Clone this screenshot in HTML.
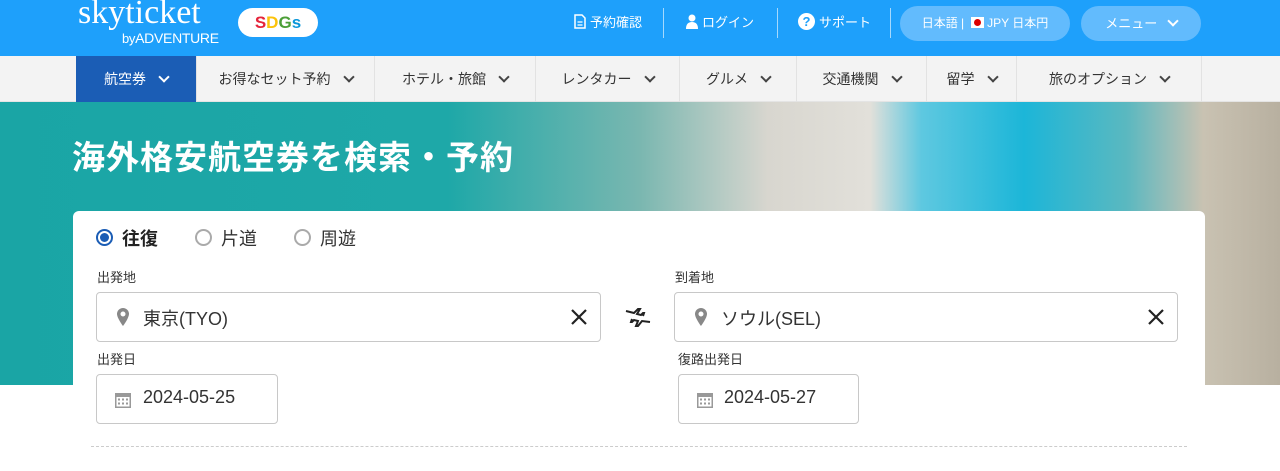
<!DOCTYPE html>
<html><head><meta charset="utf-8">
<style>
*{box-sizing:border-box;margin:0;padding:0}
body{width:1280px;height:454px;overflow:hidden;background:#fff;font-family:"Liberation Sans","Noto Sans CJK JP",sans-serif;position:relative}
.hdr{position:absolute;left:0;top:0;width:1280px;height:56px;background:#1ea0fb}
.logo{position:absolute;left:78px;top:-6px;color:#fff;font-family:"Liberation Serif",serif;font-size:34px}
.by{position:absolute;left:122px;top:30px;color:#fff;font-size:13px;letter-spacing:-0.3px}
.sdg{position:absolute;left:238px;top:8px;width:80px;height:29px;background:#fff;border-radius:15px;font-weight:bold;font-size:17px;text-align:center;line-height:29px}
.hl{position:absolute;top:12px;color:#fff;font-size:13px;display:flex;align-items:center;gap:4px}
.sep{position:absolute;top:8px;width:1px;height:30px;background:rgba(255,255,255,.6)}
.pill{position:absolute;top:6px;height:35px;background:#62bbfd;border-radius:18px;color:#fff;font-size:12px;line-height:35px;text-align:center}
.nav{position:absolute;left:0;top:56px;width:1280px;height:46px;background:#f3f3f3;border-bottom:1px solid #e4e4e4}
.ni{position:absolute;top:0;height:46px;line-height:46px;font-size:14px;color:#333;border-left:1px solid #e2e2e2;text-align:center}
.chev{display:inline-block;width:8px;height:8px;border-right:2px solid #444;border-bottom:2px solid #444;transform:rotate(45deg);margin-left:14px;position:relative;top:-3px}
.hero{position:absolute;left:0;top:102px;width:1280px;height:283px;background:linear-gradient(90deg,#1aa5a5 0%,#1ea8a8 35%,#7ab7b0 50%,#d8d6cf 60%,#e2e0da 68%,#5ec8e0 72%,#1cb6d8 80%,#5ab8c0 88%,#c9c2b2 94%,#b8b0a0 100%)}
.h1{position:absolute;left:72px;top:131px;color:#fff;font-size:33px;font-weight:bold;letter-spacing:1px}
.card{position:absolute;left:73px;top:211px;width:1132px;height:260px;background:#fff;border-radius:6px}
.lbl{position:absolute;font-size:13px;color:#333}
.inp{position:absolute;border:1px solid #c8c8c8;border-radius:4px;height:50px;background:#fff}
.txt{position:absolute;font-size:18px;color:#333;top:12px}
.ic{position:absolute}
.x{position:absolute;right:12px;top:15px}
.radio{position:absolute;top:229px;width:17px;height:17px;border-radius:50%;border:2px solid #aaa}
</style></head><body>
<div class="hdr">
<div class="logo">skyticket</div><div class="by">by<span style="font-size:14px">ADVENTURE</span></div>
<div class="sdg"><span style="color:#e5243b">S</span><span style="color:#fcc30b">D</span><span style="color:#4c9f38">G</span><span style="color:#0a97d9">s</span></div>
<div class="hl" style="left:574px"><svg width="12" height="15" viewBox="0 0 12 15"><path d="M1 1h7l3 3v10H1z" fill="none" stroke="#fff" stroke-width="1.5"/><path d="M3.5 8h5M3.5 11h5" stroke="#fff" stroke-width="1.2"/></svg>予約確認</div>
<div class="sep" style="left:663px"></div>
<div class="hl" style="left:686px"><svg width="12" height="15" viewBox="0 0 12 15"><circle cx="6" cy="4" r="3.5" fill="#fff"/><path d="M0 15q0-7 6-7t6 7z" fill="#fff"/></svg>ログイン</div>
<div class="sep" style="left:777px"></div>
<div class="hl" style="left:798px"><span style="display:inline-block;width:17px;height:17px;border-radius:50%;background:#fff;color:#1ea0fb;text-align:center;font-size:13px;line-height:17px;font-weight:bold">?</span>サポート</div>
<div class="sep" style="left:890px"></div>
<div class="pill" style="left:900px;width:170px">日本語 | &nbsp;<span style="display:inline-block;width:13px;height:11px;background:#fff;vertical-align:-1px;position:relative"><span style="position:absolute;left:3px;top:2px;width:7px;height:7px;border-radius:50%;background:#d00"></span></span> JPY 日本円</div>
<div class="pill" style="left:1081px;width:120px;font-size:13px">メニュー <span style="display:inline-block;width:8px;height:8px;border-right:2px solid #fff;border-bottom:2px solid #fff;transform:rotate(45deg);margin-left:8px;position:relative;top:-3px"></span></div>
</div>
<div class="nav">
<div class="ni" style="left:76px;width:120px;background:#1b5db5;color:#fff;border:none">航空券<span class="chev" style="border-color:#fff"></span></div>
<div class="ni" style="left:196px;width:178px">お得なセット予約<span class="chev"></span></div>
<div class="ni" style="left:374px;width:161px">ホテル・旅館<span class="chev"></span></div>
<div class="ni" style="left:535px;width:144px">レンタカー<span class="chev"></span></div>
<div class="ni" style="left:679px;width:117px">グルメ<span class="chev"></span></div>
<div class="ni" style="left:796px;width:130px">交通機関<span class="chev"></span></div>
<div class="ni" style="left:926px;width:90px">留学<span class="chev"></span></div>
<div class="ni" style="left:1016px;width:186px;border-right:1px solid #e2e2e2">旅のオプション<span class="chev"></span></div>
</div>
<div class="hero"></div>
<div class="h1">海外格安航空券を検索・予約</div>
<div class="card"></div>
<div class="radio" style="left:96px;border-color:#1b5db5"><div style="position:absolute;left:2px;top:2px;width:9px;height:9px;border-radius:50%;background:#1b5db5"></div></div>
<div class="lbl" style="left:122px;top:225px;font-size:18px;font-weight:bold;color:#222">往復</div>
<div class="radio" style="left:195px"></div><div class="lbl" style="left:221px;top:225px;font-size:18px">片道</div>
<div class="radio" style="left:294px"></div><div class="lbl" style="left:320px;top:225px;font-size:18px">周遊</div>
<div class="lbl" style="left:97px;top:267px">出発地</div>
<div class="inp" style="left:96px;top:292px;width:505px"><svg class="ic" style="left:20px;top:15px" width="12" height="18" viewBox="0 0 12 18"><path d="M6 0a6 6 0 0 0-6 6c0 4 6 12 6 12s6-8 6-12a6 6 0 0 0-6-6zm0 8.5a2.5 2.5 0 1 1 0-5 2.5 2.5 0 0 1 0 5z" fill="#888"/></svg><span class="txt" style="left:46px">東京(TYO)</span><svg class="x" width="18" height="18" viewBox="0 0 18 18"><path d="M2 2l14 14M16 2L2 16" stroke="#222" stroke-width="2.2"/></svg></div>
<svg style="position:absolute;left:624px;top:307px" width="28" height="22" viewBox="0 0 28 22"><path d="M2 4l8 2 4-4h2l-3 5 4 1 2-2h1l-1 3" fill="none" stroke="#222" stroke-width="2"/><path d="M26 15l-8-1-4 5h-2l2-5-4-1-2 2H7l1-3" fill="none" stroke="#222" stroke-width="2"/></svg>
<div class="lbl" style="left:675px;top:267px">到着地</div>
<div class="inp" style="left:674px;top:292px;width:504px"><svg class="ic" style="left:20px;top:15px" width="12" height="18" viewBox="0 0 12 18"><path d="M6 0a6 6 0 0 0-6 6c0 4 6 12 6 12s6-8 6-12a6 6 0 0 0-6-6zm0 8.5a2.5 2.5 0 1 1 0-5 2.5 2.5 0 0 1 0 5z" fill="#888"/></svg><span class="txt" style="left:46px">ソウル(SEL)</span><svg class="x" width="18" height="18" viewBox="0 0 18 18"><path d="M2 2l14 14M16 2L2 16" stroke="#222" stroke-width="2.2"/></svg></div>
<div class="lbl" style="left:97px;top:349px">出発日</div>
<div class="inp" style="left:96px;top:374px;width:182px"><svg class="ic" style="left:18px;top:16px" width="16" height="17" viewBox="0 0 16 17"><rect x="0" y="2" width="16" height="15" fill="#999"/><rect x="1.5" y="6" width="13" height="9.5" fill="#fff"/><g fill="#999"><rect x="3" y="7.5" width="2" height="2"/><rect x="7" y="7.5" width="2" height="2"/><rect x="11" y="7.5" width="2" height="2"/><rect x="3" y="11.5" width="2" height="2"/><rect x="7" y="11.5" width="2" height="2"/><rect x="11" y="11.5" width="2" height="2"/></g></svg><span class="txt" style="left:46px">2024-05-25</span></div>
<div class="lbl" style="left:678px;top:349px">復路出発日</div>
<div class="inp" style="left:678px;top:374px;width:181px"><svg class="ic" style="left:18px;top:16px" width="16" height="17" viewBox="0 0 16 17"><rect x="0" y="2" width="16" height="15" fill="#999"/><rect x="1.5" y="6" width="13" height="9.5" fill="#fff"/><g fill="#999"><rect x="3" y="7.5" width="2" height="2"/><rect x="7" y="7.5" width="2" height="2"/><rect x="11" y="7.5" width="2" height="2"/><rect x="3" y="11.5" width="2" height="2"/><rect x="7" y="11.5" width="2" height="2"/><rect x="11" y="11.5" width="2" height="2"/></g></svg><span class="txt" style="left:45px">2024-05-27</span></div>
<div style="position:absolute;left:91px;top:446px;width:1096px;border-top:1px dashed #ccc"></div>
</body></html>
